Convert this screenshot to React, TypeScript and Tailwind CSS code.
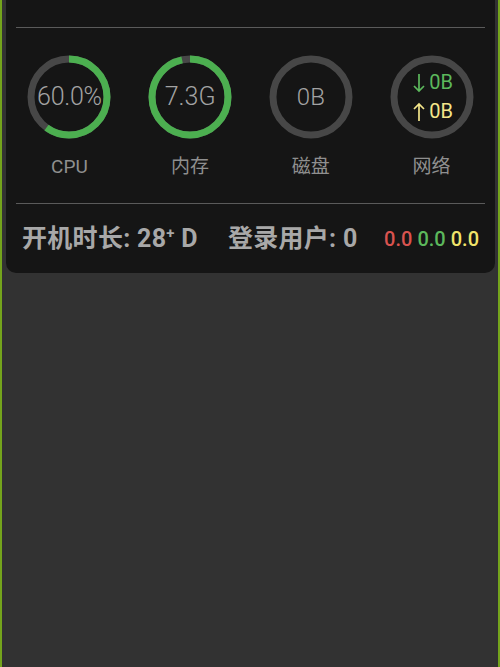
import React from 'react';

const RING = 2 * Math.PI * 38;

const Ring: React.FC<{ percent: number; children: React.ReactNode }> = ({ percent, children }) => (
  <div className="relative w-[84px] h-[84px]">
    <svg width="84" height="84" viewBox="0 0 84 84" className="-rotate-90">
      <circle cx="42" cy="42" r="38" fill="none" stroke="#474747" strokeWidth="7" />
      {percent > 0 && (
        <circle
          cx="42"
          cy="42"
          r="38"
          fill="none"
          stroke="#4caf50"
          strokeWidth="7"
          strokeDasharray={`${(RING * percent) / 100} ${RING}`}
        />
      )}
    </svg>
    <div className="absolute inset-0 flex flex-col items-center justify-center">{children}</div>
  </div>
);

const Arrow: React.FC<{ up?: boolean; color: string }> = ({ up, color }) => (
  <svg width="12" height="20" viewBox="0 0 12 20" className="mr-[4px]">
    {up ? (
      <path d="M6 2 V19 M1 7 L6 2 L11 7" stroke={color} strokeWidth="1.7" fill="none" />
    ) : (
      <path d="M6 1 V18 M1 13 L6 18 L11 13" stroke={color} strokeWidth="1.7" fill="none" />
    )}
  </svg>
);

const Gauge: React.FC<{ label: string; children: React.ReactNode }> = ({ label, children }) => (
  <div className="flex flex-col items-center">
    {children}
    <div className="mt-4 text-[19px] leading-6 text-[#8f8f8f]">{label}</div>
  </div>
);

export default function App() {
  return (
    <div
      className="w-[500px] h-[667px] bg-[#323232] border-x-2 border-[#74a41c] overflow-hidden"
      style={{ fontFamily: 'Roboto, "Noto Sans CJK SC", sans-serif' }}
    >
      <div className="ml-1 mr-[3px] bg-[#151515] rounded-b-[10px]">
        <div className="pt-[27px] mx-[10px]">
          <div className="h-px bg-[#5a5a5a]" />
        </div>

        <div className="grid grid-cols-4 px-[3px] pt-[27px]">
          <Gauge label="CPU">
            <Ring percent={60}>
              <span className="text-[25px] font-light text-[#a3a3a3] tracking-[-0.3px]">60.0%</span>
            </Ring>
          </Gauge>
          <Gauge label="内存">
            <Ring percent={96.5}>
              <span className="text-[25px] font-light text-[#a3a3a3]">7.3G</span>
            </Ring>
          </Gauge>
          <Gauge label="磁盘">
            <Ring percent={0}>
              <span className="text-[24px] font-light text-[#a3a3a3]">0B</span>
            </Ring>
          </Gauge>
          <Gauge label="网络">
            <Ring percent={0}>
              <div className="flex flex-col items-center text-[20px] leading-[29px] -mr-[3px]">
                <div className="flex items-center text-[#5cb85c]">
                  <Arrow color="#5cb85c" />
                  0B
                </div>
                <div className="flex items-center text-[#f3e58a]">
                  <Arrow up color="#f3e58a" />
                  0B
                </div>
              </div>
            </Ring>
          </Gauge>
        </div>

        <div className="mt-6 mx-[10px]">
          <div className="h-px bg-[#5a5a5a]" />
        </div>

        <div className="h-[69px] flex items-center pl-4 pr-4 text-[#a8a8a8]">
          <span className="text-[25px] font-bold tracking-[0.3px]">
            开机时长: 28<sup className="text-[15px] -top-[0.6em]">+</sup> D
          </span>
          <span className="text-[25px] font-bold tracking-[0.3px] ml-[30px]">登录用户: 0</span>
          <span className="ml-auto text-[20px] font-medium flex gap-[5px]">
            <span className="text-[#d9534f]">0.0</span>
            <span className="text-[#5cb85c]">0.0</span>
            <span className="text-[#f0e36a]">0.0</span>
          </span>
        </div>
      </div>
    </div>
  );
}
